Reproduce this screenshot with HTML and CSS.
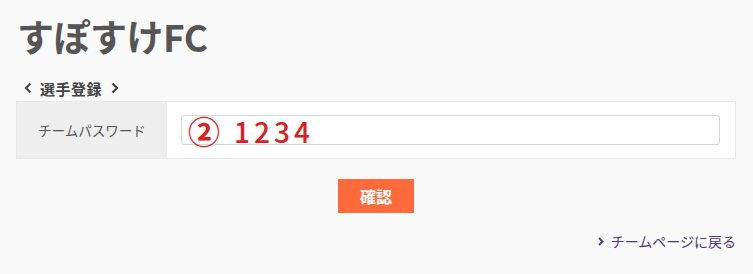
FILE: index.html
```html
<!DOCTYPE html>
<html lang="ja">
<head>
<meta charset="utf-8">
<link rel="stylesheet" href="styles.css">
</head>
<body>
<div class="page">
  <h1 class="title">すぽすけFC</h1>
  <div class="crumb">
    <svg class="chev" width="8" height="12" viewBox="0 0 8 12"><path d="M6.5 1.5 L2 6 L6.5 10.5" fill="none" stroke="#444" stroke-width="2.2"/></svg>
    <span class="crumb-text">選手登録</span>
    <svg class="chev" width="8" height="12" viewBox="0 0 8 12"><path d="M1.5 1.5 L6 6 L1.5 10.5" fill="none" stroke="#444" stroke-width="2.2"/></svg>
  </div>
  <div class="form-row">
    <div class="label">チームパスワード</div>
    <div class="field">
      <div class="input"><span class="note"><span class="circ">②</span>1234</span></div>
    </div>
  </div>
  <div class="actions"><button class="btn">確認</button></div>
  <div class="back"><a class="back-link" href="#"><svg class="chev-s" width="6" height="9" viewBox="0 0 6 9"><path d="M1 1 L4.5 4.5 L1 8" fill="none" stroke="#4e3a86" stroke-width="1.8"/></svg>チームページに戻る</a></div>
</div>
</body>
</html>
```
FILE: styles.css
```css
html, body {
  margin: 0;
  padding: 0;
  background: #f9f9f9;
}
body {
  font-family: "Noto Sans CJK JP", "Noto Sans", sans-serif;
  color: #555;
}
.page {
  padding: 14px 17px 0 16px;
}
.title {
  margin: 0 0 0 1px;
  font-size: 37px;
  line-height: 44px;
  font-weight: 700;
  color: #555;
  letter-spacing: -0.5px;
}
.crumb {
  display: flex;
  align-items: center;
  margin-top: 20px;
  height: 20px;
  font-size: 15px;
  font-weight: 700;
  color: #444;
  padding-left: 8px;
}
.chev {
  display: block;
}
.crumb-text {
  margin: 0 9px 0 8px;
  letter-spacing: 0.5px;
}
.form-row {
  display: flex;
  margin-top: 3px;
  height: 56px;
  border: 1px solid #e8e8e8;
  background: #fff;
}
.label {
  width: 150px;
  background: #eee;
  display: flex;
  align-items: center;
  justify-content: center;
  font-size: 13.5px;
  color: #555;
}
.field {
  flex: 1;
  display: flex;
  align-items: center;
  padding: 0 15px 0 14px;
}
.input {
  flex: 1;
  height: 28px;
  border: 1px solid #d4d4d4;
  border-radius: 3px;
  background: #fff;
  display: flex;
  align-items: center;
  padding-left: 6px;
}
.note {
  display: flex;
  align-items: center;
  color: #d9201e;
  font-size: 28px;
  font-weight: 500;
  letter-spacing: 4px;
  line-height: 28px;
  margin-top: 2px;
}
.circ {
  font-size: 32px;
  font-weight: 700;
  letter-spacing: 0;
  margin-right: 14px;
  margin-top: -2px;
}
.actions {
  display: flex;
  justify-content: center;
  margin-top: 20px;
}
.btn {
  width: 76px;
  height: 34px;
  border: none;
  background: #ff6a3a;
  color: #fff;
  font-family: "Noto Sans CJK JP", sans-serif;
  font-size: 16px;
  font-weight: 700;
  padding: 0;
  cursor: pointer;
}
.back {
  display: flex;
  justify-content: flex-end;
  margin-top: 18px;
}
.back-link {
  color: #4e3a86;
  text-decoration: none;
  font-size: 14px;
  display: flex;
  align-items: center;
}
.chev-s {
  display: block;
  margin-right: 7px;
}
```
